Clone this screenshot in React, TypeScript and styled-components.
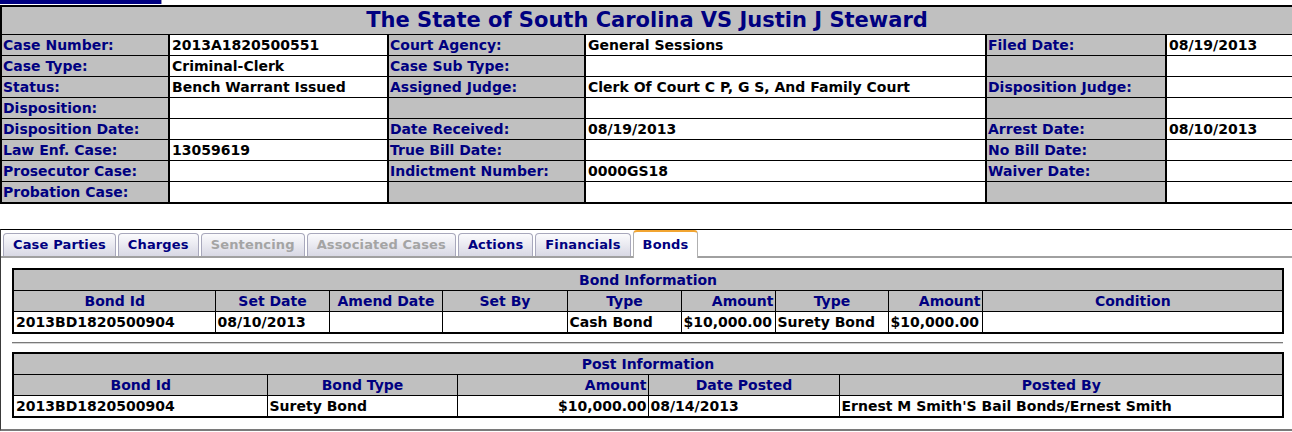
import React from "react";
import styled, { createGlobalStyle, css } from "styled-components";

const GlobalStyle = createGlobalStyle`
  html, body { margin: 0; padding: 0; background: #ffffff; }
  body { font-family: "DejaVu Sans", Verdana, sans-serif; }
`;

const Page = styled.div`
  width: 1292px;
`;

const TopStrip = styled.div`
  width: 161px;
  height: 4px;
  background: #000080;
  border-right: 1px solid #9090b8;
`;

const CaseTable = styled.table`
  width: 100%;
  border-collapse: collapse;
  table-layout: fixed;
  margin-top: 1px;
  border: 2px solid #000;
`;

const cellBase = css`
  border: 1px solid #000;
  padding: 1px 2px;
  height: 18px;
  line-height: 18px;
  font-size: 14px;
  font-weight: bold;
  white-space: nowrap;
  overflow: hidden;
  vertical-align: middle;
`;

const TitleCell = styled.th`
  background: #c0c0c0;
  color: #000080;
  font-size: 21px;
  font-weight: bold;
  line-height: 27px;
  padding: 0;
  text-align: center;
  border: 1px solid #000;
`;

const LabelCell = styled.td`
  ${cellBase};
  padding-left: 1px;
  border-left-width: 2px;
  border-right-width: 2px;
  background: #c0c0c0;
  color: #000080;
  text-align: left;
`;

const ValueCell = styled.td`
  ${cellBase};
  border-left-width: 2px;
  border-right-width: 2px;
  background: #ffffff;
  color: #000;
  text-align: left;
`;

const Panel = styled.div`
  margin-top: 25px;
  border-top: 1px solid #000;
  border-left: 1px solid #3a3a3a;
  border-bottom: 2px solid #7a7a7a;
`;

const TabStrip = styled.div`
  display: flex;
  align-items: flex-end;
  gap: 2px;
  height: 26px;
  padding-left: 2px;
  border-bottom: 2px solid #a0a0a0;
`;

type TabState = "normal" | "disabled" | "active";

const Tab = styled.div<{ $state: TabState }>`
  box-sizing: border-box;
  height: 23px;
  padding: 0 9px;
  border: 1px solid #a8a8bc;
  border-bottom: none;
  border-radius: 4px 4px 0 0;
  background: linear-gradient(#fbfbfd, #d8d8e4);
  font-size: 13px;
  font-weight: bold;
  letter-spacing: 0.15px;
  line-height: 22px;
  white-space: nowrap;
  color: ${(p) => (p.$state === "disabled" ? "#a4a4a4" : "#000080")};
  ${(p) =>
    p.$state === "active" &&
    css`
      height: 28px;
      margin-bottom: -2px;
      background: #ffffff;
      border-top: 2px solid #f2a531;
      line-height: 25px;
      border-color: #f2a531 #b0b0b0 transparent #b0b0b0;
    `}
`;

const PanelBody = styled.div`
  padding: 10px 9px 11px 11px;
`;

const DataTable = styled.table`
  width: 100%;
  border-collapse: collapse;
  table-layout: fixed;
  border: 2px solid #000;
`;

type Align = "left" | "center" | "right";

const SectionHead = styled.th`
  ${cellBase};
  background: #c0c0c0;
  color: #000080;
  text-align: center;
`;

const ColHead = styled.th<{ $align?: Align }>`
  ${cellBase};
  background: #c0c0c0;
  color: #000080;
  text-align: ${(p) => p.$align ?? "center"};
  padding-right: 1px;
`;

const DataCell = styled.td<{ $align?: Align }>`
  ${cellBase};
  height: 17px;
  background: #ffffff;
  color: #000;
  text-align: ${(p) => p.$align ?? "left"};
  padding-right: 1px;
`;

const Rule = styled.hr`
  margin: 8px 0;
  height: 0;
  border: none;
  border-top: 1px solid #7a7a7a;
  border-bottom: 1px solid #d4d4d4;
`;

const caseColWidths = [168, 219, 197, 401, 180, 127];

const caseRows: string[][] = [
  ["Case Number:", "2013A1820500551", "Court Agency:", "General Sessions", "Filed Date:", "08/19/2013"],
  ["Case Type:", "Criminal-Clerk", "Case Sub Type:", "", "", ""],
  ["Status:", "Bench Warrant Issued", "Assigned Judge:", "Clerk Of Court C P, G S, And Family Court", "Disposition Judge:", ""],
  ["Disposition:", "", "", "", "", ""],
  ["Disposition Date:", "", "Date Received:", "08/19/2013", "Arrest Date:", "08/10/2013"],
  ["Law Enf. Case:", "13059619", "True Bill Date:", "", "No Bill Date:", ""],
  ["Prosecutor Case:", "", "Indictment Number:", "0000GS18", "Waiver Date:", ""],
  ["Probation Case:", "", "", "", "", ""],
];

const tabs: { label: string; state: TabState }[] = [
  { label: "Case Parties", state: "normal" },
  { label: "Charges", state: "normal" },
  { label: "Sentencing", state: "disabled" },
  { label: "Associated Cases", state: "disabled" },
  { label: "Actions", state: "normal" },
  { label: "Financials", state: "normal" },
  { label: "Bonds", state: "active" },
];

type Col = { title: string; width: number; headAlign?: Align; cellAlign?: Align };

const bondCols: Col[] = [
  { title: "Bond Id", width: 202 },
  { title: "Set Date", width: 114 },
  { title: "Amend Date", width: 113 },
  { title: "Set By", width: 125 },
  { title: "Type", width: 114 },
  { title: "Amount", width: 94, headAlign: "right" },
  { title: "Type", width: 113 },
  { title: "Amount", width: 94, headAlign: "right" },
  { title: "Condition", width: 301 },
];

const bondRows = [
  ["2013BD1820500904", "08/10/2013", "", "", "Cash Bond", "$10,000.00", "Surety Bond", "$10,000.00", ""],
];

const postCols: Col[] = [
  { title: "Bond Id", width: 254 },
  { title: "Bond Type", width: 190 },
  { title: "Amount", width: 191, headAlign: "right", cellAlign: "right" },
  { title: "Date Posted", width: 191 },
  { title: "Posted By", width: 444 },
];

const postRows = [
  ["2013BD1820500904", "Surety Bond", "$10,000.00", "08/14/2013", "Ernest M Smith'S Bail Bonds/Ernest Smith"],
];

function InfoTable({ title, cols, rows }: { title: string; cols: Col[]; rows: string[][] }) {
  return (
    <DataTable>
      <colgroup>
        {cols.map((c, i) => (
          <col key={i} style={{ width: c.width }} />
        ))}
      </colgroup>
      <thead>
        <tr>
          <SectionHead colSpan={cols.length}>{title}</SectionHead>
        </tr>
        <tr>
          {cols.map((c, i) => (
            <ColHead key={i} $align={c.headAlign}>
              {c.title}
            </ColHead>
          ))}
        </tr>
      </thead>
      <tbody>
        {rows.map((r, ri) => (
          <tr key={ri}>
            {r.map((v, ci) => (
              <DataCell key={ci} $align={cols[ci].cellAlign}>
                {v}
              </DataCell>
            ))}
          </tr>
        ))}
      </tbody>
    </DataTable>
  );
}

export default function App() {
  return (
    <Page>
      <GlobalStyle />
      <TopStrip />
      <CaseTable>
        <colgroup>
          {caseColWidths.map((w, i) => (
            <col key={i} style={{ width: w }} />
          ))}
        </colgroup>
        <thead>
          <tr>
            <TitleCell colSpan={6}>The State of South Carolina VS Justin J Steward</TitleCell>
          </tr>
        </thead>
        <tbody>
          {caseRows.map((row, ri) => (
            <tr key={ri}>
              {row.map((v, ci) =>
                ci % 2 === 0 ? (
                  <LabelCell key={ci}>{v}</LabelCell>
                ) : (
                  <ValueCell key={ci}>{v}</ValueCell>
                )
              )}
            </tr>
          ))}
        </tbody>
      </CaseTable>
      <Panel>
        <TabStrip>
          {tabs.map((t) => (
            <Tab key={t.label} $state={t.state}>
              {t.label}
            </Tab>
          ))}
        </TabStrip>
        <PanelBody>
          <InfoTable title="Bond Information" cols={bondCols} rows={bondRows} />
          <Rule />
          <InfoTable title="Post Information" cols={postCols} rows={postRows} />
        </PanelBody>
      </Panel>
    </Page>
  );
}
